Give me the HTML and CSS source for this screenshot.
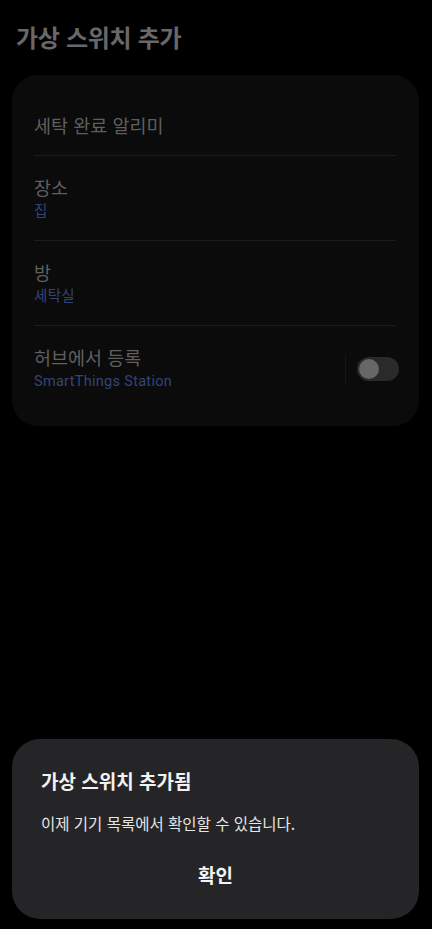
FILE: index.html
```html
<!DOCTYPE html>
<html lang="ko">
<head>
    <meta charset="UTF-8">
    <meta name="viewport" content="width=device-width, initial-scale=1.0">
    <title>가상 스위치 추가</title>
    <link rel="stylesheet" href="styles.css">
</head>
<body>
    <div class="page">
        <h1 class="page-title">가상 스위치 추가</h1>

        <div class="card">
            <div class="row">
                <span class="row-title">세탁 완료 알리미</span>
            </div>
            <div class="row">
                <div class="row-text">
                    <span class="row-title">장소</span>
                    <span class="row-sub">집</span>
                </div>
            </div>
            <div class="row">
                <div class="row-text">
                    <span class="row-title">방</span>
                    <span class="row-sub">세탁실</span>
                </div>
            </div>
            <div class="row">
                <div class="row-text">
                    <span class="row-title">허브에서 등록</span>
                    <span class="row-sub">SmartThings Station</span>
                </div>
                <div class="row-side">
                    <span class="side-divider"></span>
                    <span class="toggle"><span class="knob"></span></span>
                </div>
            </div>
        </div>
    </div>

    <div class="dialog">
        <h2 class="dialog-title">가상 스위치 추가됨</h2>
        <p class="dialog-body">이제 기기 목록에서 확인할 수 있습니다.</p>
        <button class="dialog-btn">확인</button>
    </div>
</body>
</html>
```

FILE: styles.css
```css
:root {
    --card-bg: #0b0b0b;
    --dialog-bg: #252527;
    --dim-text: #5f5f5f;
    --dim-blue: #32447a;
}

* {
    box-sizing: border-box;
}

body {
    margin: 0;
    background: #000;
    font-family: 'Noto Sans CJK KR', 'Noto Sans', sans-serif;
    height: 929px;
    display: flex;
    flex-direction: column;
    justify-content: space-between;
    overflow: hidden;
}

.page {
    padding: 0 13px 0 12px;
}

.page-title {
    margin: 0;
    padding: 21px 4px 0;
    height: 75px;
    font-size: 24px;
    line-height: 32px;
    font-weight: bold;
    color: #686868;
    letter-spacing: -0.3px;
}

.card {
    background: var(--card-bg);
    border-radius: 26px;
    padding: 20px 23px 16px 22px;
}

.row {
    display: flex;
    align-items: center;
    padding: 19px 0 18px;
    border-top: 1px solid #1c1c1c;
}

.row:first-child {
    border-top: none;
    padding: 18px 0;
}

.row-text {
    flex: 1;
    display: flex;
    flex-direction: column;
}

.row-title {
    font-size: 18.5px;
    line-height: 24px;
    color: var(--dim-text);
}

.row-sub {
    margin-top: 3px;
    font-family: Roboto, 'Noto Sans CJK KR', sans-serif;
    font-size: 14.5px;
    line-height: 20px;
    letter-spacing: 0.3px;
    color: var(--dim-blue);
}

.row-side {
    display: flex;
    align-items: center;
    gap: 11px;
    margin-right: -3px;
}

.side-divider {
    width: 1px;
    height: 30px;
    background: #161616;
}

.toggle {
    width: 42px;
    height: 24px;
    border-radius: 12px;
    background: #2a2a2a;
    padding: 2px;
    display: flex;
    align-items: center;
}

.knob {
    width: 20px;
    height: 20px;
    border-radius: 50%;
    background: #676767;
}

.dialog {
    margin: 0 13px 10px 12px;
    background: var(--dialog-bg);
    border-radius: 28px;
    padding: 28px 29px 30px;
    height: 180px;
    display: flex;
    flex-direction: column;
}

.dialog-title {
    margin: 0;
    font-size: 19px;
    line-height: 28px;
    font-weight: bold;
    color: #f2f2f2;
}

.dialog-body {
    margin: 17px 0 0;
    font-size: 15.5px;
    line-height: 22px;
    color: #e6e6e6;
}

.dialog-btn {
    margin-top: 27px;
    padding: 0;
    border: none;
    background: none;
    font-family: inherit;
    font-size: 19px;
    line-height: 28px;
    font-weight: bold;
    color: #f4f4f4;
    align-self: center;
    cursor: pointer;
}
```
